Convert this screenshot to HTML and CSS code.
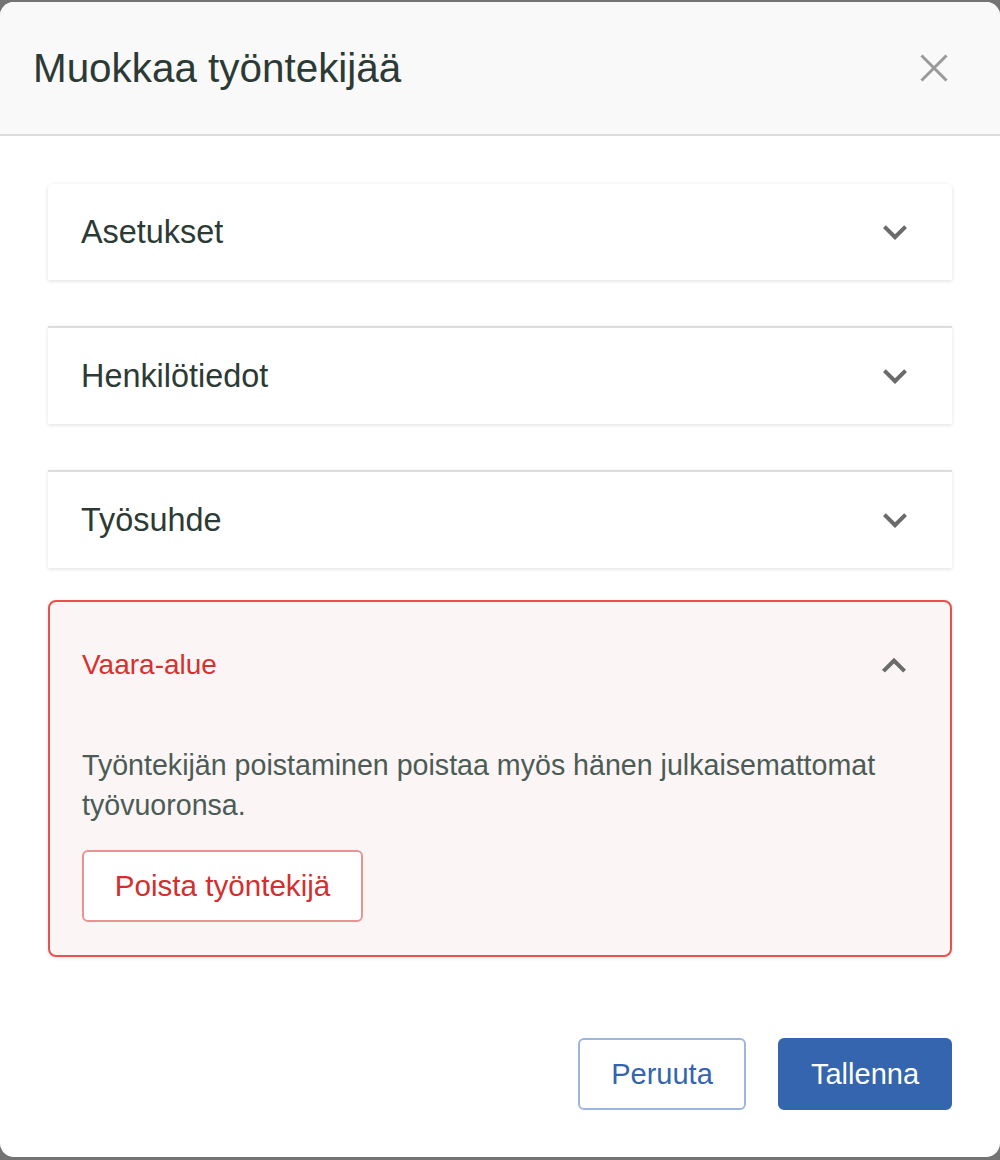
FILE: index.html
```html
<!DOCTYPE html>
<html lang="fi">
<head>
<meta charset="utf-8">
<title>Muokkaa työntekijää</title>
<link rel="stylesheet" href="styles.css">
</head>
<body>
<div class="modal">
  <header class="modal-header">
    <h1 class="modal-title">Muokkaa työntekijää</h1>
    <button class="close-btn" aria-label="Sulje">
      <svg width="28" height="28" viewBox="0 0 28 28"><path d="M1.5 1.5 L26.5 26.5 M26.5 1.5 L1.5 26.5" stroke="#9a9a9a" stroke-width="3" fill="none"/></svg>
    </button>
  </header>

  <main class="modal-content">
    <section class="acc acc-first">
      <div class="acc-summary">
        <span class="acc-title">Asetukset</span>
        <svg class="chev" width="24" height="16" viewBox="6 8 12 8"><path d="M16.59 8.59 12 13.17 7.41 8.59 6 10l6 6 6-6z" fill="#6b6b6b"/></svg>
      </div>
    </section>
    <section class="acc acc-divided">
      <div class="acc-summary">
        <span class="acc-title">Henkilötiedot</span>
        <svg class="chev" width="24" height="16" viewBox="6 8 12 8"><path d="M16.59 8.59 12 13.17 7.41 8.59 6 10l6 6 6-6z" fill="#6b6b6b"/></svg>
      </div>
    </section>
    <section class="acc acc-divided acc-last">
      <div class="acc-summary">
        <span class="acc-title">Työsuhde</span>
        <svg class="chev" width="24" height="16" viewBox="6 8 12 8"><path d="M16.59 8.59 12 13.17 7.41 8.59 6 10l6 6 6-6z" fill="#6b6b6b"/></svg>
      </div>
    </section>

    <section class="danger">
      <div class="danger-head">
        <span class="danger-title">Vaara-alue</span>
        <svg class="chev" width="24" height="16" viewBox="6 7.6 12 8"><path d="M12 8l-6 6 1.41 1.41L12 10.83l4.59 4.58L18 14z" fill="#6b6b6b"/></svg>
      </div>
      <div class="danger-body">
        <p class="danger-text">Työntekijän poistaminen poistaa myös hänen julkaisemattomat työvuoronsa.</p>
        <button class="btn btn-danger">Poista työntekijä</button>
      </div>
    </section>
  </main>

  <footer class="modal-footer">
    <button class="btn btn-outline">Peruuta</button>
    <button class="btn btn-primary">Tallenna</button>
  </footer>
</div>
</body>
</html>
```

FILE: styles.css
```css
* {
  box-sizing: border-box;
}

html, body {
  margin: 0;
  padding: 0;
}

body {
  background: #747474;
  height: 1160px;
  padding-top: 2px;
  font-family: "Liberation Sans", Arial, sans-serif;
  overflow: hidden;
}

.modal {
  width: 1000px;
  height: 1155px;
  background: #ffffff;
  border-radius: 14px;
  overflow: hidden;
  display: flex;
  flex-direction: column;
}

.modal-header {
  height: 134px;
  flex: none;
  background: #f9f9f9;
  border-bottom: 2px solid #dcdcdc;
  display: flex;
  align-items: center;
  justify-content: space-between;
  padding: 0 52px 0 33px;
}

.modal-title {
  margin: 0;
  font-size: 40.4px;
  font-weight: 400;
  color: #2c3a35;
  line-height: 1;
}

.close-btn {
  border: 0;
  background: none;
  padding: 0;
  width: 28px;
  height: 28px;
  display: flex;
  cursor: pointer;
}

.modal-content {
  padding: 48px 48px 0;
  display: flex;
  flex-direction: column;
}

.acc {
  background: #ffffff;
  box-shadow: 0 1px 4px rgba(0, 0, 0, 0.13);
}

.acc-first {
  border-radius: 5px 5px 0 0;
  margin-bottom: 46px;
}

.acc-divided {
  border-top: 2px solid #dcdcdc;
  margin-bottom: 46px;
}

.acc-last {
  margin-bottom: 32px;
}

.acc-summary {
  height: 96px;
  display: flex;
  align-items: center;
  justify-content: space-between;
  padding: 0 45px 0 33px;
}

.acc-title {
  font-size: 32.4px;
  color: #2c3a35;
  line-height: 1;
}

.chev {
  display: block;
  flex: none;
}

.danger {
  border: 2px solid #e8514f;
  border-radius: 8px;
  background: #fcf5f5;
  box-shadow: 0 1px 4px rgba(0, 0, 0, 0.10);
  padding: 0 44px 33px 32px;
}

.danger-head {
  display: flex;
  align-items: center;
  justify-content: space-between;
  height: 40px;
  margin-top: 43px;
}

.danger-title {
  font-size: 28px;
  color: #d8302f;
  line-height: 40px;
}

.danger-body {
  padding-top: 60px;
}

.danger-text {
  margin: 0 0 25px;
  font-size: 28.6px;
  line-height: 40px;
  color: #4b5b56;
}

.btn {
  font-family: "Liberation Sans", Arial, sans-serif;
  font-size: 29px;
  height: 72px;
  border-radius: 6px;
  background: #ffffff;
  cursor: pointer;
  line-height: 1;
}

.btn-danger {
  border: 2px solid #e99393;
  color: #d32f2f;
  font-size: 29.6px;
  padding: 0;
  width: 281px;
}

.modal-footer {
  margin-top: auto;
  display: flex;
  justify-content: flex-end;
  gap: 32px;
  padding: 0 48px 47px;
}

.btn-outline {
  border: 2px solid #9db6de;
  color: #3465ae;
  width: 168px;
}

.btn-primary {
  border: 2px solid #3465ae;
  background: #3465ae;
  color: #ffffff;
  width: 174px;
}
```
